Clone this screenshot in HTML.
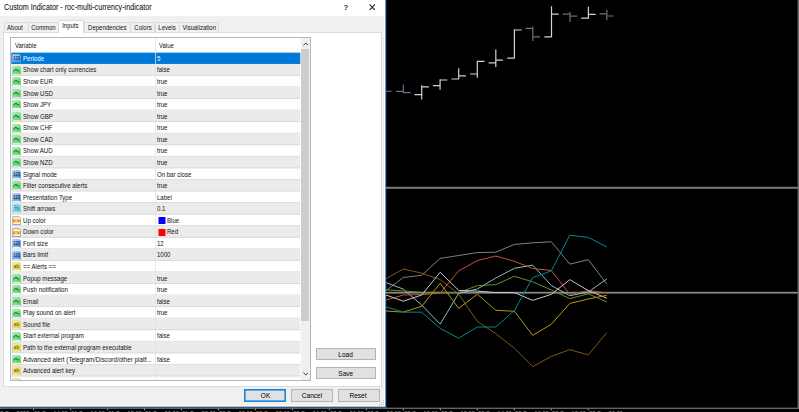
<!DOCTYPE html>
<html><head><meta charset="utf-8"><title>Custom Indicator - roc-multi-currency-indicator</title>
<style>
html,body{margin:0;padding:0}
body{width:799px;height:412px;background:#000;position:relative;overflow:hidden;font-family:"Liberation Sans",sans-serif;font-size:8px;color:#000}
#chart{position:absolute;left:0;top:0}
#axis{position:absolute;left:0;top:408px;width:799px;height:4px;overflow:hidden}
.tl{position:absolute;top:2.45px;font-size:6.6px;line-height:8px;color:#999;white-space:nowrap;transform:scaleX(.86);transform-origin:0 0}
#dlg{position:absolute;left:0;top:0;width:386px;height:407px;background:#f0f0f0;overflow:hidden}
#edges{position:absolute;left:0;top:0}
#tbar{position:absolute;left:0;top:0;width:386px;height:16px;background:#fff}
#ttl{transform:scaleX(.79);transform-origin:0 0;position:absolute;left:4px;top:2.2px;font-size:9.1px;line-height:11px;white-space:nowrap;color:#000}
.tb{position:absolute;top:2.1px;font-size:7.8px;font-weight:bold;line-height:11px;color:#333}
.tab{position:absolute;top:21.5px;height:10.5px;box-sizing:border-box;border:1px solid #dcdcdc;border-bottom:none;background:#f0f0f0;display:flex;justify-content:center;font-size:7.6px;line-height:9px;white-space:nowrap;color:#111}
.tab.on{top:20.3px;height:12.7px;background:#fff;z-index:3;line-height:10px}
.t{display:block;flex:none;transform:scaleX(.79);transform-origin:50% 0}
.btn .t{transform:scaleX(.845)}
#pane{position:absolute;left:3px;top:32px;width:378.5px;height:355px;box-sizing:border-box;border:1px solid #dcdcdc;background:#fff}
#lb{position:absolute;left:10.4px;top:37.4px;width:301px;height:343.6px;box-sizing:border-box;border:1px solid #adb7c6;background:#fff;overflow:hidden}
#rows{position:absolute;left:0;top:0;width:300.3px;height:380.2px;overflow:hidden}
.hd{transform:scaleX(.786);transform-origin:0 0;position:absolute;top:40.7px;font-size:7.6px;line-height:10px;color:#111}
.row{position:absolute;left:11.4px;width:289px;height:11.56px;white-space:nowrap;font-size:7.6px;line-height:11.6px;color:#111}
.row.sel{color:#fff}
.ic{position:absolute;left:0.35px;top:1.25px;width:9.3px;height:9.1px}
.n{position:absolute;left:11.8px;top:0;transform:scaleX(.805);transform-origin:0 0}
.v{position:absolute;left:145.6px;top:0;transform:scaleX(.797);transform-origin:0 0}
.v.vc{left:155.3px}
.v.vc .sw{transform:scaleX(1.255);transform-origin:100% 0}
.sw{position:absolute;left:-9.2px;top:2.6px;width:6.6px;height:6.6px}
#colsep{position:absolute;left:155.3px;top:38.4px;width:1px;height:341.6px;background:rgba(225,225,225,.75)}
#sb{position:absolute;left:300.5px;top:38.4px;width:9.5px;height:341.4px;background:#f0f0f0}
#thumb{position:absolute;left:0.4px;top:10.5px;width:8.5px;height:272px;background:#cdcdcd}
.btn{position:absolute;box-sizing:border-box;border:1px solid #b4b4b4;background:#e1e1e1;display:flex;justify-content:center;font-size:7.7px;color:#000;white-space:nowrap}
</style></head><body>
<svg width="0" height="0" style="position:absolute"><defs>
<linearGradient id="gI" x1="0" y1="0" x2="0.6" y2="1"><stop offset="0" stop-color="#c9e0f7"/><stop offset="1" stop-color="#4388d3"/></linearGradient>
<linearGradient id="gB" x1="0" y1="0" x2="0.6" y2="1"><stop offset="0" stop-color="#b4f5b9"/><stop offset="1" stop-color="#4ccf5e"/></linearGradient>
<linearGradient id="gS" x1="0" y1="0" x2="0.6" y2="1"><stop offset="0" stop-color="#f8f2b0"/><stop offset="1" stop-color="#e2d24c"/></linearGradient>
<linearGradient id="gD" x1="0" y1="0" x2="0.6" y2="1"><stop offset="0" stop-color="#b8eef6"/><stop offset="1" stop-color="#5cc6dc"/></linearGradient>
</defs></svg>
<svg id="chart" width="799" height="412" viewBox="0 0 799 412">
<rect x="386" y="186.8" width="413" height="2" fill="#7c7c7c"/>
<rect x="386" y="291.8" width="413" height="1.8" fill="#8a8a8a"/>
<rect x="797.6" y="0" width="1.4" height="408" fill="#6e6e6e"/>
<path d="M386 91.3H391.5" stroke="#5f7489" stroke-width="1.1"/>
<path d="M403.3 84.5V92.9M396.1 91.3H403.3M403.3 92.6H410.5" stroke="#5f7489" stroke-width="1.2" fill="none"/>
<path d="M421.7 85.3V99.5M414.5 94.7H421.7M421.7 86.8H428.9" stroke="#d6d2cc" stroke-width="1.2" fill="none"/>
<path d="M440.1 79.3V89.8M432.9 85.7H440.1M440.1 80.0H447.3" stroke="#d6d2cc" stroke-width="1.2" fill="none"/>
<path d="M458.7 68.3V79.4M451.5 79.0H458.7M458.7 75.8H465.9" stroke="#d6d2cc" stroke-width="1.2" fill="none"/>
<path d="M477.3 60.8V77.8M470.1 74.0H477.3M477.3 61.3H484.5" stroke="#d6d2cc" stroke-width="1.2" fill="none"/>
<path d="M495.8 49.6V67.0M488.6 62.8H495.8M495.8 60.2H503.0" stroke="#d6d2cc" stroke-width="1.2" fill="none"/>
<path d="M514.4 29.3V58.6M507.2 58.2H514.4M514.4 30.0H521.6" stroke="#d6d2cc" stroke-width="1.2" fill="none"/>
<path d="M532.8 26.4V41.0M525.6 28.3H532.8M532.8 36.9H540.0" stroke="#5f7489" stroke-width="1.2" fill="none"/>
<path d="M551.5 6.2V37.3M544.3 36.9H551.5M551.5 14.2H558.7" stroke="#d6d2cc" stroke-width="1.2" fill="none"/>
<path d="M570.0 12.0V22.0M562.8 14.2H570.0M570.0 16.1H577.2" stroke="#5f7489" stroke-width="1.2" fill="none"/>
<path d="M588.4 6.8V18.7M581.2 18.2H588.4M588.4 14.3H595.6" stroke="#d6d2cc" stroke-width="1.2" fill="none"/>
<path d="M606.8 9.8V20.3M599.6 13.8H606.8M606.8 16.0H614.0" stroke="#5f7489" stroke-width="1.2" fill="none"/>
<polyline points="386,278.6 403.3,269 421.7,273.1 440.2,279.6 458.7,294 477.3,321.3 495.8,333.7 514.4,348.2 532.7,366.6 551.3,356.4 569.8,349.7 588.3,354.9 606.8,332.6" stroke="#7a5a12" stroke-width="1" fill="none"/>
<polyline points="386,290.6 403.3,277.5 421.7,275.3 440.2,258.4 458.7,255.5 477.3,252.6 495.8,252.2 514.4,244.4 532.7,242.8 551.3,241.8 569.8,264.1 588.3,259.7 606.8,284" stroke="#808080" stroke-width="1" fill="none"/>
<polyline points="386,282.6 403.3,289.1 421.7,305.1 440.2,324.1 458.7,293.3 477.3,289 495.8,278 514.4,268.3 532.7,265.1 551.3,285.5 569.8,295.7 588.3,292 606.8,279" stroke="#8fbcbc" stroke-width="1" fill="none"/>
<polyline points="386,289.8 403.3,290.9 421.7,292.3 440.2,292.3 458.7,292.6 477.3,285.7 495.8,284.6 514.4,276.3 532.7,281.9 551.3,289.9 569.8,298.6 588.3,293.8 606.8,302" stroke="#6b8e23" stroke-width="1" fill="none"/>
<polyline points="386,300 403.3,295 421.7,294.6 440.2,293.2 458.7,270.8 477.3,260.6 495.8,256 514.4,261.3 532.7,268.5 551.3,270.5 569.8,294.3 588.3,290.6 606.8,292.8" stroke="#c0503c" stroke-width="1" fill="none"/>
<polyline points="386,295 403.3,301.2 421.7,295 440.2,272.3 458.7,290.4 477.3,291.1 495.8,292.6 514.4,292.6 532.7,300.4 551.3,294.3 569.8,279.7 588.3,290.6 606.8,298.2" stroke="#c8c8c8" stroke-width="1" fill="none"/>
<polyline points="386,311 403.3,312.1 421.7,306.3 440.2,283.3 458.7,308.4 477.3,294.2 495.8,310.3 514.4,311.3 532.7,335.3 551.3,324.3 569.8,303.4 588.3,299 606.8,295.3" stroke="#b8960b" stroke-width="1" fill="none"/>
<polyline points="386,306.9 403.3,312.1 421.7,312.2 440.2,328.4 458.7,338.2 477.3,327 495.8,327 514.4,310.5 532.7,277.6 551.3,270.9 569.8,235.2 588.3,237.4 606.8,246.9" stroke="#008b8b" stroke-width="1" fill="none"/>
</svg>
<div id="axis">
<span class="tl" style="left:-3.1px">15 Sep 2022</span>
<span class="tl" style="left:33.9px">21 Sep 14:00</span>
<span class="tl" style="left:70.9px">21 Sep 16:00</span>
<span class="tl" style="left:107.9px">21 Sep 18:00</span>
<span class="tl" style="left:144.8px">21 Sep 20:00</span>
<span class="tl" style="left:181.8px">21 Sep 22:00</span>
<span class="tl" style="left:218.8px">22 Sep 00:00</span>
<span class="tl" style="left:255.8px">22 Sep 02:00</span>
<span class="tl" style="left:292.8px">22 Sep 04:00</span>
<span class="tl" style="left:329.7px">22 Sep 06:00</span>
<span class="tl" style="left:366.7px">22 Sep 08:00</span>
<span class="tl" style="left:403.7px">22 Sep 10:00</span>
<span class="tl" style="left:440.7px">22 Sep 12:00</span>
<span class="tl" style="left:477.7px">22 Sep 14:00</span>
<span class="tl" style="left:514.6px">22 Sep 16:00</span>
<span class="tl" style="left:551.6px">22 Sep 18:00</span>
<span class="tl" style="left:588.6px">22 Sep 20:00</span>
</div>
<div id="dlg">
<div id="tbar"><span id="ttl">Custom Indicator - roc-multi-currency-indicator</span>
<span class="tb" style="left:343.6px">?</span>
<svg style="position:absolute;left:368.6px;top:3.7px" width="6.6" height="6.6" viewBox="0 0 7 7"><path d="M0.5 0.5L6.5 6.5M6.5 0.5L0.5 6.5" stroke="#222" stroke-width="1.15"/></svg>
</div>
<div id="pane"></div>
<div class="tab" style="left:4.2px;width:24.6px;padding-right:2.6px"><span class="t">About</span></div>
<div class="tab" style="left:27.8px;width:31.5px"><span class="t">Common</span></div>
<div class="tab on" style="left:58.3px;width:25.8px;padding-right:1.4px"><span class="t">Inputs</span></div>
<div class="tab" style="left:83.8px;width:47.3px;padding-right:1px"><span class="t">Dependencies</span></div>
<div class="tab" style="left:130.1px;width:25.4px"><span class="t">Colors</span></div>
<div class="tab" style="left:154.5px;width:25.9px"><span class="t">Levels</span></div>
<div class="tab" style="left:179.4px;width:39.2px"><span class="t">Visualization</span></div>
<div id="lb"></div>
<span class="hd" style="left:14.8px">Variable</span>
<span class="hd" style="left:159.2px">Value</span>
<svg style="position:absolute;left:0;top:0" width="311" height="380.2" viewBox="0 0 311 380.2">
<rect x="11.3" y="63.81" width="289" height="11.963" fill="#ebebeb"/>
<rect x="11.3" y="74.93" width="289" height="0.9" fill="#d8d8d8"/>
<rect x="11.3" y="86.49" width="289" height="0.9" fill="#d8d8d8"/>
<rect x="11.3" y="87.34" width="289" height="11.563" fill="#ebebeb"/>
<rect x="11.3" y="98.05" width="289" height="0.9" fill="#d8d8d8"/>
<rect x="11.3" y="109.62" width="289" height="0.9" fill="#d8d8d8"/>
<rect x="11.3" y="110.47" width="289" height="11.563" fill="#ebebeb"/>
<rect x="11.3" y="121.18" width="289" height="0.9" fill="#d8d8d8"/>
<rect x="11.3" y="132.74" width="289" height="0.9" fill="#d8d8d8"/>
<rect x="11.3" y="133.59" width="289" height="11.563" fill="#ebebeb"/>
<rect x="11.3" y="144.30" width="289" height="0.9" fill="#d8d8d8"/>
<rect x="11.3" y="155.87" width="289" height="0.9" fill="#d8d8d8"/>
<rect x="11.3" y="156.72" width="289" height="11.563" fill="#ebebeb"/>
<rect x="11.3" y="167.43" width="289" height="0.9" fill="#d8d8d8"/>
<rect x="11.3" y="178.99" width="289" height="0.9" fill="#d8d8d8"/>
<rect x="11.3" y="179.84" width="289" height="11.563" fill="#ebebeb"/>
<rect x="11.3" y="190.56" width="289" height="0.9" fill="#d8d8d8"/>
<rect x="11.3" y="202.12" width="289" height="0.9" fill="#d8d8d8"/>
<rect x="11.3" y="202.97" width="289" height="11.563" fill="#ebebeb"/>
<rect x="11.3" y="213.68" width="289" height="0.9" fill="#d8d8d8"/>
<rect x="11.3" y="225.25" width="289" height="0.9" fill="#d8d8d8"/>
<rect x="11.3" y="226.10" width="289" height="11.563" fill="#ebebeb"/>
<rect x="11.3" y="236.81" width="289" height="0.9" fill="#d8d8d8"/>
<rect x="11.3" y="248.37" width="289" height="0.9" fill="#d8d8d8"/>
<rect x="11.3" y="249.22" width="289" height="11.563" fill="#ebebeb"/>
<rect x="11.3" y="259.93" width="289" height="0.9" fill="#d8d8d8"/>
<rect x="11.3" y="271.50" width="289" height="0.9" fill="#d8d8d8"/>
<rect x="11.3" y="272.35" width="289" height="11.563" fill="#ebebeb"/>
<rect x="11.3" y="283.06" width="289" height="0.9" fill="#d8d8d8"/>
<rect x="11.3" y="294.62" width="289" height="0.9" fill="#d8d8d8"/>
<rect x="11.3" y="295.47" width="289" height="11.563" fill="#ebebeb"/>
<rect x="11.3" y="306.19" width="289" height="0.9" fill="#d8d8d8"/>
<rect x="11.3" y="317.75" width="289" height="0.9" fill="#d8d8d8"/>
<rect x="11.3" y="318.60" width="289" height="11.563" fill="#ebebeb"/>
<rect x="11.3" y="329.31" width="289" height="0.9" fill="#d8d8d8"/>
<rect x="11.3" y="340.87" width="289" height="0.9" fill="#d8d8d8"/>
<rect x="11.3" y="341.72" width="289" height="11.563" fill="#ebebeb"/>
<rect x="11.3" y="352.44" width="289" height="0.9" fill="#d8d8d8"/>
<rect x="11.3" y="364.00" width="289" height="0.9" fill="#d8d8d8"/>
<rect x="11.3" y="364.85" width="289" height="11.563" fill="#ebebeb"/>
<rect x="11.3" y="375.56" width="289" height="0.9" fill="#d8d8d8"/>
<rect x="11.3" y="387.13" width="289" height="0.9" fill="#d8d8d8"/>
<rect x="11.3" y="52.65" width="289" height="11.3" fill="#0078d7"/>
</svg>
<div id="rows">
<div class="row sel" style="top:52.90px"><svg class="ic" viewBox="0 0 9 9"><path d="M1 0.3H7.2L8.7 1.8V8.7L7.5 7.7H1.5L0.3 8.7V1A.7.7 0 0 1 1 0.3Z" fill="url(#gI)" stroke="#7fb0e4" stroke-width=".5"/><text x="4.5" y="6.3" font-size="5.2" font-weight="bold" text-anchor="middle" textLength="6.6" lengthAdjust="spacingAndGlyphs" fill="#16356e" font-family="Liberation Sans, sans-serif">123</text></svg><span class="n">Periode</span><span class="v">5</span></div>
<div class="row alt" style="top:64.46px"><svg class="ic" viewBox="0 0 9 9"><path d="M1 0.3H7.2L8.7 1.8V8.7L7.5 7.7H1.5L0.3 8.7V1A.7.7 0 0 1 1 0.3Z" fill="url(#gB)" stroke="#86e290" stroke-width=".5"/><path d="M1.3 5.3L3.8 3.1L5.3 4.6L7.1 4.9" fill="none" stroke="#1d7a2d" stroke-width="1.05" stroke-linejoin="round"/></svg><span class="n">Show chart only currencies</span><span class="v">false</span></div>
<div class="row" style="top:76.03px"><svg class="ic" viewBox="0 0 9 9"><path d="M1 0.3H7.2L8.7 1.8V8.7L7.5 7.7H1.5L0.3 8.7V1A.7.7 0 0 1 1 0.3Z" fill="url(#gB)" stroke="#86e290" stroke-width=".5"/><path d="M1.3 5.3L3.8 3.1L5.3 4.6L7.1 4.9" fill="none" stroke="#1d7a2d" stroke-width="1.05" stroke-linejoin="round"/></svg><span class="n">Show EUR</span><span class="v">true</span></div>
<div class="row alt" style="top:87.59px"><svg class="ic" viewBox="0 0 9 9"><path d="M1 0.3H7.2L8.7 1.8V8.7L7.5 7.7H1.5L0.3 8.7V1A.7.7 0 0 1 1 0.3Z" fill="url(#gB)" stroke="#86e290" stroke-width=".5"/><path d="M1.3 5.3L3.8 3.1L5.3 4.6L7.1 4.9" fill="none" stroke="#1d7a2d" stroke-width="1.05" stroke-linejoin="round"/></svg><span class="n">Show USD</span><span class="v">true</span></div>
<div class="row" style="top:99.15px"><svg class="ic" viewBox="0 0 9 9"><path d="M1 0.3H7.2L8.7 1.8V8.7L7.5 7.7H1.5L0.3 8.7V1A.7.7 0 0 1 1 0.3Z" fill="url(#gB)" stroke="#86e290" stroke-width=".5"/><path d="M1.3 5.3L3.8 3.1L5.3 4.6L7.1 4.9" fill="none" stroke="#1d7a2d" stroke-width="1.05" stroke-linejoin="round"/></svg><span class="n">Show JPY</span><span class="v">true</span></div>
<div class="row alt" style="top:110.72px"><svg class="ic" viewBox="0 0 9 9"><path d="M1 0.3H7.2L8.7 1.8V8.7L7.5 7.7H1.5L0.3 8.7V1A.7.7 0 0 1 1 0.3Z" fill="url(#gB)" stroke="#86e290" stroke-width=".5"/><path d="M1.3 5.3L3.8 3.1L5.3 4.6L7.1 4.9" fill="none" stroke="#1d7a2d" stroke-width="1.05" stroke-linejoin="round"/></svg><span class="n">Show GBP</span><span class="v">true</span></div>
<div class="row" style="top:122.28px"><svg class="ic" viewBox="0 0 9 9"><path d="M1 0.3H7.2L8.7 1.8V8.7L7.5 7.7H1.5L0.3 8.7V1A.7.7 0 0 1 1 0.3Z" fill="url(#gB)" stroke="#86e290" stroke-width=".5"/><path d="M1.3 5.3L3.8 3.1L5.3 4.6L7.1 4.9" fill="none" stroke="#1d7a2d" stroke-width="1.05" stroke-linejoin="round"/></svg><span class="n">Show CHF</span><span class="v">true</span></div>
<div class="row alt" style="top:133.84px"><svg class="ic" viewBox="0 0 9 9"><path d="M1 0.3H7.2L8.7 1.8V8.7L7.5 7.7H1.5L0.3 8.7V1A.7.7 0 0 1 1 0.3Z" fill="url(#gB)" stroke="#86e290" stroke-width=".5"/><path d="M1.3 5.3L3.8 3.1L5.3 4.6L7.1 4.9" fill="none" stroke="#1d7a2d" stroke-width="1.05" stroke-linejoin="round"/></svg><span class="n">Show CAD</span><span class="v">true</span></div>
<div class="row" style="top:145.40px"><svg class="ic" viewBox="0 0 9 9"><path d="M1 0.3H7.2L8.7 1.8V8.7L7.5 7.7H1.5L0.3 8.7V1A.7.7 0 0 1 1 0.3Z" fill="url(#gB)" stroke="#86e290" stroke-width=".5"/><path d="M1.3 5.3L3.8 3.1L5.3 4.6L7.1 4.9" fill="none" stroke="#1d7a2d" stroke-width="1.05" stroke-linejoin="round"/></svg><span class="n">Show AUD</span><span class="v">true</span></div>
<div class="row alt" style="top:156.97px"><svg class="ic" viewBox="0 0 9 9"><path d="M1 0.3H7.2L8.7 1.8V8.7L7.5 7.7H1.5L0.3 8.7V1A.7.7 0 0 1 1 0.3Z" fill="url(#gB)" stroke="#86e290" stroke-width=".5"/><path d="M1.3 5.3L3.8 3.1L5.3 4.6L7.1 4.9" fill="none" stroke="#1d7a2d" stroke-width="1.05" stroke-linejoin="round"/></svg><span class="n">Show NZD</span><span class="v">true</span></div>
<div class="row" style="top:168.53px"><svg class="ic" viewBox="0 0 9 9"><path d="M1 0.3H7.2L8.7 1.8V8.7L7.5 7.7H1.5L0.3 8.7V1A.7.7 0 0 1 1 0.3Z" fill="url(#gI)" stroke="#7fb0e4" stroke-width=".5"/><text x="4.5" y="6.3" font-size="5.2" font-weight="bold" text-anchor="middle" textLength="6.6" lengthAdjust="spacingAndGlyphs" fill="#16356e" font-family="Liberation Sans, sans-serif">123</text></svg><span class="n">Signal mode</span><span class="v">On bar close</span></div>
<div class="row alt" style="top:180.09px"><svg class="ic" viewBox="0 0 9 9"><path d="M1 0.3H7.2L8.7 1.8V8.7L7.5 7.7H1.5L0.3 8.7V1A.7.7 0 0 1 1 0.3Z" fill="url(#gB)" stroke="#86e290" stroke-width=".5"/><path d="M1.3 5.3L3.8 3.1L5.3 4.6L7.1 4.9" fill="none" stroke="#1d7a2d" stroke-width="1.05" stroke-linejoin="round"/></svg><span class="n">Filter consecutive alerts</span><span class="v">true</span></div>
<div class="row" style="top:191.66px"><svg class="ic" viewBox="0 0 9 9"><path d="M1 0.3H7.2L8.7 1.8V8.7L7.5 7.7H1.5L0.3 8.7V1A.7.7 0 0 1 1 0.3Z" fill="url(#gI)" stroke="#7fb0e4" stroke-width=".5"/><text x="4.5" y="6.3" font-size="5.2" font-weight="bold" text-anchor="middle" textLength="6.6" lengthAdjust="spacingAndGlyphs" fill="#16356e" font-family="Liberation Sans, sans-serif">123</text></svg><span class="n">Presentation Type</span><span class="v">Label</span></div>
<div class="row alt" style="top:203.22px"><svg class="ic" viewBox="0 0 9 9"><path d="M1 0.3H7.2L8.7 1.8V8.7L7.5 7.7H1.5L0.3 8.7V1A.7.7 0 0 1 1 0.3Z" fill="url(#gD)" stroke="#7fd3e4" stroke-width=".5"/><text x="4.3" y="6.3" font-size="6.6" font-weight="bold" text-anchor="middle" fill="#1b8199" font-family="Liberation Sans, sans-serif">½</text></svg><span class="n">Shift arrows</span><span class="v">0.1</span></div>
<div class="row" style="top:214.78px"><svg class="ic" viewBox="0 0 9 9"><path d="M0.6 0.8h6.4l1.5 1.5v6.1h-7.9z" fill="#fff" stroke="#777" stroke-width=".7"/><path d="M0.6 0.8V8.4" stroke="#c8c8c8" stroke-width=".7"/><rect x="0.9" y="3.3" width="6.6" height="3" fill="#ff8400"/><rect x="2.6" y="3.8" width="3" height="2" fill="#ffd61f"/></svg><span class="n">Up color</span><span class="v vc"><i class="sw" style="background:#0000ff"></i>Blue</span></div>
<div class="row alt" style="top:226.35px"><svg class="ic" viewBox="0 0 9 9"><path d="M0.6 0.8h6.4l1.5 1.5v6.1h-7.9z" fill="#fff" stroke="#777" stroke-width=".7"/><path d="M0.6 0.8V8.4" stroke="#c8c8c8" stroke-width=".7"/><rect x="0.9" y="3.3" width="6.6" height="3" fill="#ff8400"/><rect x="2.6" y="3.8" width="3" height="2" fill="#ffd61f"/></svg><span class="n">Down color</span><span class="v vc"><i class="sw" style="background:#ff0000"></i>Red</span></div>
<div class="row" style="top:237.91px"><svg class="ic" viewBox="0 0 9 9"><path d="M1 0.3H7.2L8.7 1.8V8.7L7.5 7.7H1.5L0.3 8.7V1A.7.7 0 0 1 1 0.3Z" fill="url(#gI)" stroke="#7fb0e4" stroke-width=".5"/><text x="4.5" y="6.3" font-size="5.2" font-weight="bold" text-anchor="middle" textLength="6.6" lengthAdjust="spacingAndGlyphs" fill="#16356e" font-family="Liberation Sans, sans-serif">123</text></svg><span class="n">Font size</span><span class="v">12</span></div>
<div class="row alt" style="top:249.47px"><svg class="ic" viewBox="0 0 9 9"><path d="M1 0.3H7.2L8.7 1.8V8.7L7.5 7.7H1.5L0.3 8.7V1A.7.7 0 0 1 1 0.3Z" fill="url(#gI)" stroke="#7fb0e4" stroke-width=".5"/><text x="4.5" y="6.3" font-size="5.2" font-weight="bold" text-anchor="middle" textLength="6.6" lengthAdjust="spacingAndGlyphs" fill="#16356e" font-family="Liberation Sans, sans-serif">123</text></svg><span class="n">Bars limit</span><span class="v">1000</span></div>
<div class="row" style="top:261.03px"><svg class="ic" viewBox="0 0 9 9"><path d="M1 0.3H7.2L8.7 1.8V8.7L7.5 7.7H1.5L0.3 8.7V1A.7.7 0 0 1 1 0.3Z" fill="url(#gS)" stroke="#dccd5a" stroke-width=".5"/><text x="4.3" y="6.2" font-size="5" font-weight="bold" text-anchor="middle" fill="#7d6e12" font-family="Liberation Sans, sans-serif">ab</text></svg><span class="n">== Alerts ==</span><span class="v"></span></div>
<div class="row alt" style="top:272.60px"><svg class="ic" viewBox="0 0 9 9"><path d="M1 0.3H7.2L8.7 1.8V8.7L7.5 7.7H1.5L0.3 8.7V1A.7.7 0 0 1 1 0.3Z" fill="url(#gB)" stroke="#86e290" stroke-width=".5"/><path d="M1.3 5.3L3.8 3.1L5.3 4.6L7.1 4.9" fill="none" stroke="#1d7a2d" stroke-width="1.05" stroke-linejoin="round"/></svg><span class="n">Popup message</span><span class="v">true</span></div>
<div class="row" style="top:284.16px"><svg class="ic" viewBox="0 0 9 9"><path d="M1 0.3H7.2L8.7 1.8V8.7L7.5 7.7H1.5L0.3 8.7V1A.7.7 0 0 1 1 0.3Z" fill="url(#gB)" stroke="#86e290" stroke-width=".5"/><path d="M1.3 5.3L3.8 3.1L5.3 4.6L7.1 4.9" fill="none" stroke="#1d7a2d" stroke-width="1.05" stroke-linejoin="round"/></svg><span class="n">Push notification</span><span class="v">true</span></div>
<div class="row alt" style="top:295.72px"><svg class="ic" viewBox="0 0 9 9"><path d="M1 0.3H7.2L8.7 1.8V8.7L7.5 7.7H1.5L0.3 8.7V1A.7.7 0 0 1 1 0.3Z" fill="url(#gB)" stroke="#86e290" stroke-width=".5"/><path d="M1.3 5.3L3.8 3.1L5.3 4.6L7.1 4.9" fill="none" stroke="#1d7a2d" stroke-width="1.05" stroke-linejoin="round"/></svg><span class="n">Email</span><span class="v">false</span></div>
<div class="row" style="top:307.29px"><svg class="ic" viewBox="0 0 9 9"><path d="M1 0.3H7.2L8.7 1.8V8.7L7.5 7.7H1.5L0.3 8.7V1A.7.7 0 0 1 1 0.3Z" fill="url(#gB)" stroke="#86e290" stroke-width=".5"/><path d="M1.3 5.3L3.8 3.1L5.3 4.6L7.1 4.9" fill="none" stroke="#1d7a2d" stroke-width="1.05" stroke-linejoin="round"/></svg><span class="n">Play sound on alert</span><span class="v">true</span></div>
<div class="row alt" style="top:318.85px"><svg class="ic" viewBox="0 0 9 9"><path d="M1 0.3H7.2L8.7 1.8V8.7L7.5 7.7H1.5L0.3 8.7V1A.7.7 0 0 1 1 0.3Z" fill="url(#gS)" stroke="#dccd5a" stroke-width=".5"/><text x="4.3" y="6.2" font-size="5" font-weight="bold" text-anchor="middle" fill="#7d6e12" font-family="Liberation Sans, sans-serif">ab</text></svg><span class="n">Sound file</span><span class="v"></span></div>
<div class="row" style="top:330.41px"><svg class="ic" viewBox="0 0 9 9"><path d="M1 0.3H7.2L8.7 1.8V8.7L7.5 7.7H1.5L0.3 8.7V1A.7.7 0 0 1 1 0.3Z" fill="url(#gB)" stroke="#86e290" stroke-width=".5"/><path d="M1.3 5.3L3.8 3.1L5.3 4.6L7.1 4.9" fill="none" stroke="#1d7a2d" stroke-width="1.05" stroke-linejoin="round"/></svg><span class="n">Start external program</span><span class="v">false</span></div>
<div class="row alt" style="top:341.97px"><svg class="ic" viewBox="0 0 9 9"><path d="M1 0.3H7.2L8.7 1.8V8.7L7.5 7.7H1.5L0.3 8.7V1A.7.7 0 0 1 1 0.3Z" fill="url(#gS)" stroke="#dccd5a" stroke-width=".5"/><text x="4.3" y="6.2" font-size="5" font-weight="bold" text-anchor="middle" fill="#7d6e12" font-family="Liberation Sans, sans-serif">ab</text></svg><span class="n">Path to the external program executable</span><span class="v"></span></div>
<div class="row" style="top:353.54px"><svg class="ic" viewBox="0 0 9 9"><path d="M1 0.3H7.2L8.7 1.8V8.7L7.5 7.7H1.5L0.3 8.7V1A.7.7 0 0 1 1 0.3Z" fill="url(#gB)" stroke="#86e290" stroke-width=".5"/><path d="M1.3 5.3L3.8 3.1L5.3 4.6L7.1 4.9" fill="none" stroke="#1d7a2d" stroke-width="1.05" stroke-linejoin="round"/></svg><span class="n" style="transform:scaleX(.821)">Advanced alert (Telegram/Discord/other platf...</span><span class="v">false</span></div>
<div class="row alt" style="top:365.10px"><svg class="ic" viewBox="0 0 9 9"><path d="M1 0.3H7.2L8.7 1.8V8.7L7.5 7.7H1.5L0.3 8.7V1A.7.7 0 0 1 1 0.3Z" fill="url(#gS)" stroke="#dccd5a" stroke-width=".5"/><text x="4.3" y="6.2" font-size="5" font-weight="bold" text-anchor="middle" fill="#7d6e12" font-family="Liberation Sans, sans-serif">ab</text></svg><span class="n">Advanced alert key</span><span class="v"></span></div>
<div class="row" style="top:376.66px"><svg class="ic" viewBox="0 0 9 9"><path d="M1 0.3H7.2L8.7 1.8V8.7L7.5 7.7H1.5L0.3 8.7V1A.7.7 0 0 1 1 0.3Z" fill="url(#gS)" stroke="#dccd5a" stroke-width=".5"/><text x="4.3" y="6.2" font-size="5" font-weight="bold" text-anchor="middle" fill="#7d6e12" font-family="Liberation Sans, sans-serif">ab</text></svg><span class="n"></span><span class="v"></span></div>
</div>
<div id="colsep"></div>
<div id="sb"><div id="thumb"></div>
<svg style="position:absolute;left:2.2px;top:3.6px" width="5.6" height="4" viewBox="0 0 5.6 4"><path d="M0.4 3.4L2.8 1L5.2 3.4" fill="none" stroke="#333" stroke-width="1"/></svg>
<svg style="position:absolute;left:2.2px;top:334px" width="5.6" height="4" viewBox="0 0 5.6 4"><path d="M0.4 0.6L2.8 3L5.2 0.6" fill="none" stroke="#333" stroke-width="1"/></svg>
</div>
<div class="btn" style="left:315.5px;top:348.2px;width:60px;height:12.2px;line-height:12px"><span class="t">Load</span></div>
<div class="btn" style="left:315.5px;top:367.2px;width:60px;height:12.2px;line-height:12px"><span class="t">Save</span></div>
<div class="btn" style="left:244.2px;top:389px;width:42px;height:12.5px;line-height:12.4px;border-color:#1883da;box-shadow:inset 0 0 0 0.7px #3a95df"><span class="t">OK</span></div>
<div class="btn" style="left:290.7px;top:389px;width:42px;height:12.5px;line-height:12.4px"><span class="t">Cancel</span></div>
<div class="btn" style="left:337.5px;top:389px;width:42px;height:12.5px;line-height:12.4px"><span class="t">Reset</span></div>
<svg style="position:absolute;left:377.8px;top:399.2px" width="7" height="7" viewBox="0 0 7 7"><g fill="#c2c2c2"><rect x="5" y="1" width="1.2" height="1.2"/><rect x="3" y="3" width="1.2" height="1.2"/><rect x="5" y="3" width="1.2" height="1.2"/><rect x="1" y="5" width="1.2" height="1.2"/><rect x="3" y="5" width="1.2" height="1.2"/><rect x="5" y="5" width="1.2" height="1.2"/></g></svg>
</div>
<svg id="edges" width="799" height="412" viewBox="0 0 799 412">
<rect x="0" y="405.4" width="385.2" height="1.3" fill="#fff"/>
<rect x="384" y="0" width="1.3" height="406.7" fill="#fff"/>
<rect x="0" y="406.6" width="386.2" height="1.1" fill="#2a67a6"/>
<rect x="385.2" y="0" width="1" height="407.7" fill="#3b82c4"/>
<rect x="0" y="407.7" width="799" height="1.1" fill="#7c7c7c"/>
<rect x="33.05" y="408.6" width="1.1" height="1.7" fill="#9a9a9a"/>
<rect x="70.03" y="408.6" width="1.1" height="1.7" fill="#9a9a9a"/>
<rect x="107.01" y="408.6" width="1.1" height="1.7" fill="#9a9a9a"/>
<rect x="143.99" y="408.6" width="1.1" height="1.7" fill="#9a9a9a"/>
<rect x="180.97" y="408.6" width="1.1" height="1.7" fill="#9a9a9a"/>
<rect x="217.95" y="408.6" width="1.1" height="1.7" fill="#9a9a9a"/>
<rect x="254.93" y="408.6" width="1.1" height="1.7" fill="#9a9a9a"/>
<rect x="291.91" y="408.6" width="1.1" height="1.7" fill="#9a9a9a"/>
<rect x="328.89" y="408.6" width="1.1" height="1.7" fill="#9a9a9a"/>
<rect x="365.87" y="408.6" width="1.1" height="1.7" fill="#9a9a9a"/>
<rect x="402.85" y="408.6" width="1.1" height="1.7" fill="#9a9a9a"/>
<rect x="439.83" y="408.6" width="1.1" height="1.7" fill="#9a9a9a"/>
<rect x="476.81" y="408.6" width="1.1" height="1.7" fill="#9a9a9a"/>
<rect x="513.79" y="408.6" width="1.1" height="1.7" fill="#9a9a9a"/>
<rect x="550.77" y="408.6" width="1.1" height="1.7" fill="#9a9a9a"/>
<rect x="587.75" y="408.6" width="1.1" height="1.7" fill="#9a9a9a"/>
</svg>
</body></html>
